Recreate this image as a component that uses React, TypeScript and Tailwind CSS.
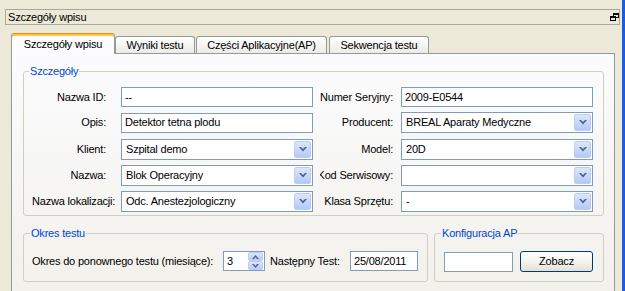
import type { ReactNode } from "react";

function RestoreIcon() {
  return (
    <svg width="9" height="8" viewBox="0 0 9 8" shapeRendering="crispEdges">
      <g fill="#000">
        <rect x="3" y="0" width="6" height="2" />
        <rect x="8" y="0" width="1" height="5" />
        <rect x="6" y="4" width="3" height="1" />
        <rect x="3" y="0" width="1" height="3" />
        <rect x="0" y="3" width="6" height="2" />
        <rect x="0" y="3" width="1" height="5" />
        <rect x="5" y="3" width="1" height="5" />
        <rect x="0" y="7" width="6" height="1" />
      </g>
    </svg>
  );
}

function ComboArrow() {
  return (
    <span className="flex h-[17px] w-[17px] items-center justify-center rounded-[2px] border border-[#bccdf5] bg-gradient-to-b from-[#dbe6fe] to-[#b4c9f8]">
      <svg width="8" height="5" viewBox="0 0 8 5">
        <polygon points="0,0 2,0 4,2 6,0 8,0 4,4.5" fill="#4d6185" />
      </svg>
    </span>
  );
}

function TextBox({ value, className = "" }: { value?: string; className?: string }) {
  return (
    <div
      className={`flex h-[20px] items-center border border-[#7f9db9] bg-white pl-[3px] ${className}`}
    >
      {value}
    </div>
  );
}

function Combo({ value }: { value?: string }) {
  return (
    <div className="flex h-[21px] w-[192px] items-center justify-between border border-[#7f9db9] bg-white pl-[4px] pr-px">
      <span>{value}</span>
      <ComboArrow />
    </div>
  );
}

function LeftLabel({ children }: { children: ReactNode }) {
  return <div className="w-[74px] whitespace-nowrap text-right">{children}</div>;
}

function RightLabel({ children }: { children: ReactNode }) {
  return (
    <div className="ml-[7px] flex w-[73px] justify-end overflow-hidden whitespace-nowrap">
      <span>{children}</span>
    </div>
  );
}

function Tab({ label, className = "" }: { label: string; className?: string }) {
  return (
    <div
      className={`flex h-[17px] items-center justify-center rounded-t-[3px] border border-b-0 border-[#919b9c] bg-gradient-to-b from-white to-[#ecebe6] ${className}`}
    >
      {label}
    </div>
  );
}

export default function App() {
  return (
    <div className="flex h-[291px] w-[625px] overflow-hidden bg-[#ece9d8] font-['Liberation_Sans',Arial,sans-serif] text-[11px] tracking-[-0.2px] text-black">
      <div className="flex w-[622px] flex-col">
        <div className="ml-[5px] mt-[9px] flex h-[16px] w-[615px] items-center justify-between border border-[#aca899] pl-[2px]">
          <span>Szczegóły wpisu</span>
          <RestoreIcon />
        </div>

        <div className="ml-[11px] mt-[8px] flex w-[604px] flex-1 flex-col">
          <div className="flex h-[20px] items-end">
            <div className="relative z-10 -mb-px flex h-[21px] w-[104px] items-center justify-center rounded-t-[3px] border border-b-0 border-[#919b9c] border-t-[#e68b2c] bg-[#fcfcfe] shadow-[inset_0_2px_0_#ffc73c]">
              Szczegóły wpisu
            </div>
            <Tab label="Wyniki testu" className="w-[80px]" />
            <Tab label="Części Aplikacyjne(AP)" className="ml-[1px] w-[131px]" />
            <Tab label="Sekwencja testu" className="ml-[2px] w-[100px]" />
          </div>

          <div className="flex-1 border-x border-t border-[#919b9c] bg-gradient-to-b from-[#fcfcfe] to-[#f2f1eb] pl-[11px] pr-[10px] pt-[11px]">
            <fieldset className="rounded-[3px] border border-[#d0d0bf] pb-[3px] pt-[9px]">
              <legend className="ml-[5px] px-[1px] leading-[13px] text-[#0046d5]">Szczegóły</legend>
              <div className="flex flex-col pl-[8px]">
                <div className="flex items-center">
                  <LeftLabel>Nazwa ID:</LeftLabel>
                  <TextBox value="--" className="ml-[15px] w-[192px]" />
                  <RightLabel>Numer Seryjny:</RightLabel>
                  <TextBox value="2009-E0544" className="ml-[8px] w-[192px]" />
                </div>
                <div className="mt-[5px] flex items-center">
                  <LeftLabel>Opis:</LeftLabel>
                  <TextBox value="Detektor tetna plodu" className="ml-[15px] w-[192px]" />
                  <RightLabel>Producent:</RightLabel>
                  <div className="ml-[8px]">
                    <Combo value="BREAL Aparaty Medyczne" />
                  </div>
                </div>
                <div className="mt-[6px] flex items-center">
                  <LeftLabel>Klient:</LeftLabel>
                  <div className="ml-[15px]">
                    <Combo value="Szpital demo" />
                  </div>
                  <RightLabel>Model:</RightLabel>
                  <div className="ml-[8px]">
                    <Combo value="20D" />
                  </div>
                </div>
                <div className="mt-[5px] flex items-center">
                  <LeftLabel>Nazwa:</LeftLabel>
                  <div className="ml-[15px]">
                    <Combo value="Blok Operacyjny" />
                  </div>
                  <RightLabel>Kod Serwisowy:</RightLabel>
                  <div className="ml-[8px]">
                    <Combo value="" />
                  </div>
                </div>
                <div className="mt-[5px] flex items-center">
                  <LeftLabel>Nazwa lokalizacji:</LeftLabel>
                  <div className="ml-[15px]">
                    <Combo value="Odc. Anestezjologiczny" />
                  </div>
                  <RightLabel>Klasa Sprzętu:</RightLabel>
                  <div className="ml-[8px]">
                    <Combo value="-" />
                  </div>
                </div>
              </div>
            </fieldset>

            <div className="mt-[11px] flex">
              <fieldset className="w-[405px] rounded-[3px] border border-[#d0d0bf] pb-[10px] pt-[11px]">
                <legend className="ml-[6px] px-[1px] leading-[13px] text-[#0046d5]">Okres testu</legend>
                <div className="flex items-center pl-[8px]">
                  <span className="w-[191px] whitespace-nowrap">Okres do ponownego testu (miesiące):</span>
                  <div className="flex h-[20px] w-[42px] items-center justify-between border border-[#7f9db9] bg-white pl-[3px] pr-px">
                    <span>3</span>
                    <div className="flex h-[18px] w-[15px] flex-col">
                      <span className="flex h-[9px] items-center justify-center rounded-[2px] border border-[#bccdf5] bg-gradient-to-b from-[#dbe6fe] to-[#b8ccf8]">
                        <svg width="7" height="4" viewBox="0 0 7 4">
                          <polygon points="0,4 2,4 3.5,2 5,4 7,4 3.5,0" fill="#4d6185" />
                        </svg>
                      </span>
                      <span className="flex h-[9px] items-center justify-center rounded-[2px] border border-[#bccdf5] bg-gradient-to-b from-[#dbe6fe] to-[#b8ccf8]">
                        <svg width="7" height="4" viewBox="0 0 7 4">
                          <polygon points="0,0 2,0 3.5,2 5,0 7,0 3.5,4" fill="#4d6185" />
                        </svg>
                      </span>
                    </div>
                  </div>
                  <span className="ml-[5px] w-[80px] whitespace-nowrap">Następny Test:</span>
                  <TextBox value="25/08/2011" className="w-[68px]" />
                </div>
              </fieldset>

              <fieldset className="ml-[6px] w-[170px] rounded-[3px] border border-[#d0d0bf] pb-[9px] pt-[11px]">
                <legend className="ml-[6px] px-[1px] leading-[13px] text-[#0046d5]">Konfiguracja AP</legend>
                <div className="flex items-center pl-[9px]">
                  <TextBox className="w-[69px]" />
                  <button className="ml-[7px] flex h-[21px] w-[73px] items-center justify-center rounded-[3px] border border-[#003c74] bg-gradient-to-b from-white via-[#f5f4ef] to-[#e2e0d6]">
                    Zobacz
                  </button>
                </div>
              </fieldset>
            </div>
          </div>
        </div>
      </div>
      <div className="w-[3px] bg-[#1a5de0]" />
    </div>
  );
}
